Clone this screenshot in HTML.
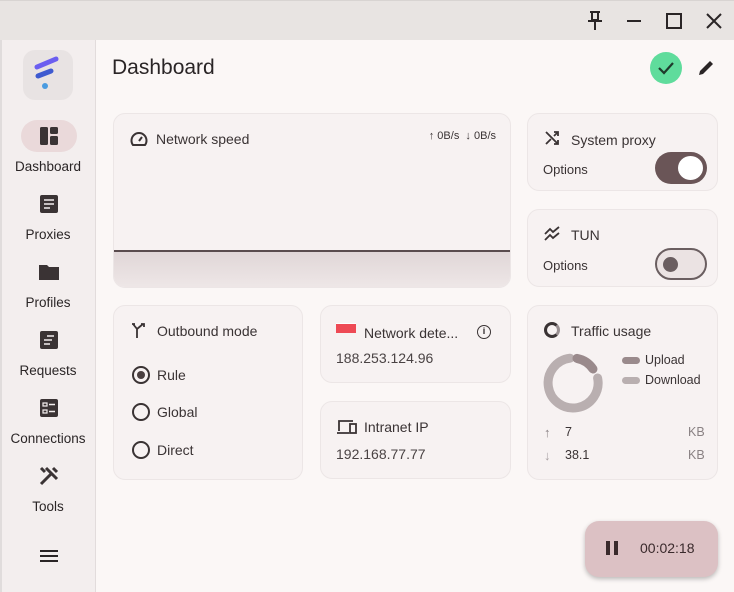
<!DOCTYPE html>
<html><head><meta charset="utf-8"><style>
*{box-sizing:border-box;margin:0;padding:0}
body{width:734px;height:592px;overflow:hidden;font-family:"Segoe UI","Liberation Sans",sans-serif;background:#fbf7f6;color:#2a2526;position:relative}
.tb{position:absolute;left:0;top:0;width:734px;height:40px;background:#e8e4e2;border-top:1px solid #d8d4d2}
.side{position:absolute;left:0;top:40px;width:96px;height:552px;background:#f3eeee;border-right:1px solid #e2dcdc;border-left:2px solid #e0dcdc}
.card{position:absolute;background:#f7f2f2;border:1px solid #ece6e6;border-radius:12px}
.t{position:absolute;font-size:14px;color:#3a3334}
.s{position:absolute;font-size:13px;color:#3a3334}
.nav{position:absolute;width:96px;text-align:center;font-size:13.5px;color:#2a2526;left:-2px}
</style></head><body>
<div class="tb">
<svg style="position:absolute;left:586px;top:10px" width="18" height="20" viewBox="0 0 18 20"><path d="M4 1h10M6 1v8h6V1M2 10h14M9 10v9" stroke="#2a2526" stroke-width="2" fill="none"/></svg>
<div style="position:absolute;left:627px;top:19px;width:14px;height:2px;background:#2a2526"></div>
<div style="position:absolute;left:666px;top:12px;width:16px;height:16px;border:2px solid #2a2526"></div>
<svg style="position:absolute;left:706px;top:12px" width="16" height="16"><path d="M1 1L15 15M15 1L1 15" stroke="#2a2526" stroke-width="2"/></svg>
</div>
<div class="side">
<div style="position:absolute;left:21px;top:10px;width:50px;height:50px;border-radius:12px;background:#e8e3e3"></div>
<svg style="position:absolute;left:30px;top:14px" width="32" height="40"><path d="M5 13L24 5" stroke="#6b5ef0" stroke-width="5" stroke-linecap="round"/><path d="M6 22L19 17" stroke="#3e5ad0" stroke-width="5" stroke-linecap="round"/><circle cx="13" cy="32" r="3" fill="#4a9be0"/></svg>
<div style="position:absolute;left:19px;top:80px;width:56px;height:32px;border-radius:16px;background:#ead9da"></div>
<svg style="position:absolute;left:37px;top:86px" width="20" height="20"><rect x="1" y="1" width="8" height="18" rx="1.5" fill="#3a3334"/><rect x="11" y="1" width="8" height="7" rx="1.5" fill="#3a3334"/><rect x="11" y="10" width="8" height="9" rx="1.5" fill="#3a3334"/></svg>
<div class="nav" style="top:119px">Dashboard</div>
<svg style="position:absolute;left:37px;top:154px" width="20" height="20"><rect x="1" y="1" width="18" height="18" rx="2" fill="#3a3334"/><path d="M5 6h10M5 10h10M5 14h6" stroke="#f3eeee" stroke-width="1.6"/></svg>
<div class="nav" style="top:187px">Proxies</div>
<svg style="position:absolute;left:36px;top:223px" width="22" height="18"><path d="M1 2h8l2 2h10v13H1z" fill="#3a3334"/></svg>
<div class="nav" style="top:255px">Profiles</div>
<svg style="position:absolute;left:37px;top:290px" width="20" height="20"><rect x="1" y="1" width="18" height="18" rx="2" fill="#3a3334"/><path d="M8 6h7M5 10h8M5 14h6" stroke="#f3eeee" stroke-width="1.6"/></svg>
<div class="nav" style="top:323px">Requests</div>
<svg style="position:absolute;left:37px;top:358px" width="20" height="20"><rect x="1" y="1" width="18" height="18" rx="2" fill="#3a3334"/><path d="M4 5h4v3H4zM4 12h4v3H4z" stroke="#f3eeee" stroke-width="1.2" fill="none"/><path d="M10 6.5h6M10 13.5h6" stroke="#f3eeee" stroke-width="1.6"/></svg>
<div class="nav" style="top:391px">Connections</div>
<svg style="position:absolute;left:36px;top:425px" width="22" height="22"><path d="M3 19L14 8M8 3l11 11M15 3l4 4M3 3l4 4" stroke="#3a3334" stroke-width="3"/></svg>
<div class="nav" style="top:459px">Tools</div>
<div style="position:absolute;left:38px;top:510px;width:18px;height:2px;background:#2a2526;box-shadow:0 5px 0 #2a2526,0 10px 0 #2a2526"></div>
</div>

<div style="position:absolute;left:112px;top:56px;font-size:21px;color:#2a2526">Dashboard</div>
<div style="position:absolute;left:650px;top:52px;width:32px;height:32px;border-radius:50%;background:#5fdc9c"></div>
<svg style="position:absolute;left:657px;top:60px" width="18" height="16"><path d="M2 8l5 5L16 3" stroke="#1f3a2c" stroke-width="2.2" fill="none"/></svg>
<svg style="position:absolute;left:696px;top:58px" width="20" height="20"><path d="M3 17l1-4L14 3l3 3L7 16z" fill="#2a2526"/></svg>

<div class="card" style="left:113px;top:113px;width:398px;height:175px;overflow:hidden">
<svg style="position:absolute;left:16px;top:17px" width="18" height="16"><path d="M3 14A7.5 7.5 0 1 1 15 14z" stroke="#3a3334" stroke-width="2" fill="none"/><path d="M9 10l3-4" stroke="#3a3334" stroke-width="2"/></svg>
<div class="t" style="left:42px;top:17px">Network speed</div>
<div style="position:absolute;right:14px;top:16px;font-size:11px;color:#3a3334">↑ 0B/s &nbsp;↓ 0B/s</div>
<div style="position:absolute;left:0;top:136px;width:398px;height:40px;background:linear-gradient(#e0d6d7,#efe8e8);border-top:2px solid #5a4c4e"></div>
</div>

<div class="card" style="left:527px;top:113px;width:191px;height:78px">
<svg style="position:absolute;left:16px;top:16px" width="16" height="16"><path d="M2 2l12 12M10 14h4v-4M2 14l5-5M10 2h4v4M14 2l-4 4" stroke="#3a3334" stroke-width="1.8" fill="none"/></svg>
<div class="t" style="left:43px;top:18px">System proxy</div>
<div class="s" style="left:15px;top:48px">Options</div>
<div style="position:absolute;left:127px;top:38px;width:52px;height:32px;border-radius:16px;background:#6a5557"></div>
<div style="position:absolute;left:150px;top:42px;width:25px;height:24px;border-radius:50%;background:#fff"></div>
</div>

<div class="card" style="left:527px;top:209px;width:191px;height:78px">
<svg style="position:absolute;left:16px;top:16px" width="18" height="16"><path d="M1 8l5-5 3 3 6-5M1 14l5-5 3 3 6-5" stroke="#3a3334" stroke-width="1.8" fill="none"/></svg>
<div class="t" style="left:43px;top:17px">TUN</div>
<div class="s" style="left:15px;top:48px">Options</div>
<div style="position:absolute;left:127px;top:38px;width:52px;height:32px;border-radius:16px;background:#ebe3e3;border:2px solid #6a5e60"></div>
<div style="position:absolute;left:135px;top:47px;width:15px;height:15px;border-radius:50%;background:#6a5e60"></div>
</div>

<div class="card" style="left:113px;top:305px;width:190px;height:175px">
<svg style="position:absolute;left:16px;top:16px" width="18" height="18"><path d="M3 2l4 5v9M7 7l6-5M11 2h3v3M2 2h3" stroke="#3a3334" stroke-width="1.8" fill="none"/></svg>
<div class="t" style="left:43px;top:17px">Outbound mode</div>
<div style="position:absolute;left:18px;top:60px;width:18px;height:18px;border-radius:50%;border:2px solid #3a3334"></div>
<div style="position:absolute;left:23px;top:65px;width:8px;height:8px;border-radius:50%;background:#4a3f40"></div>
<div class="t" style="left:43px;top:61px">Rule</div>
<div style="position:absolute;left:18px;top:97px;width:18px;height:18px;border-radius:50%;border:2px solid #3a3334"></div>
<div class="t" style="left:43px;top:98px">Global</div>
<div style="position:absolute;left:18px;top:135px;width:18px;height:18px;border-radius:50%;border:2px solid #3a3334"></div>
<div class="t" style="left:43px;top:136px">Direct</div>
</div>

<div class="card" style="left:320px;top:305px;width:191px;height:78px">
<div style="position:absolute;left:15px;top:17px;width:20px;height:10px;background:#ee4a55;border-top:1px solid #fff"></div>
<div class="t" style="left:43px;top:19px">Network dete...</div>
<div style="position:absolute;left:156px;top:19px;width:14px;height:14px;border-radius:50%;border:1.6px solid #3a3334;font-size:9px;line-height:11px;text-align:center;font-weight:bold">i</div>
<div class="t" style="left:15px;top:44px;color:#4a4344">188.253.124.96</div>
</div>

<div class="card" style="left:320px;top:401px;width:191px;height:78px">
<svg style="position:absolute;left:15px;top:17px" width="22" height="16"><path d="M3 12V2h14M1 14h12" stroke="#3a3334" stroke-width="1.8" fill="none"/><rect x="14" y="5" width="6" height="9" stroke="#3a3334" stroke-width="1.8" fill="none"/></svg>
<div class="t" style="left:43px;top:17px">Intranet IP</div>
<div class="t" style="left:15px;top:44px;color:#4a4344">192.168.77.77</div>
</div>

<div class="card" style="left:527px;top:305px;width:191px;height:175px">
<div style="position:absolute;left:16px;top:16px;width:16px;height:16px;border-radius:50%;border:3px solid #3a3334;border-right-color:#9a9092"></div>
<div class="t" style="left:43px;top:17px">Traffic usage</div>
<svg style="position:absolute;left:14px;top:46px" width="62" height="62" viewBox="0 0 62 62"><path d="M28 6.2A25 25 0 1 0 55.6 26" stroke="#b9afb0" stroke-width="9" fill="none" stroke-linecap="round"/><path d="M35 6.4A25 25 0 0 1 51 17" stroke="#9a8a8c" stroke-width="9" fill="none" stroke-linecap="round"/></svg>
<div style="position:absolute;left:94px;top:51px;width:18px;height:7px;border-radius:4px;background:#9a8a8c"></div>
<div class="s" style="left:117px;top:47px;font-size:12.5px">Upload</div>
<div style="position:absolute;left:94px;top:71px;width:18px;height:7px;border-radius:4px;background:#b9afb0"></div>
<div class="s" style="left:117px;top:67px;font-size:12.5px">Download</div>
<div class="s" style="left:16px;top:119px;color:#8a8284">↑</div>
<div class="s" style="left:37px;top:119px;font-size:12.5px">7</div>
<div class="s" style="left:160px;top:119px;color:#8a8284;font-size:12.5px">KB</div>
<div class="s" style="left:16px;top:142px;color:#a8a0a2">↓</div>
<div class="s" style="left:37px;top:142px;font-size:12.5px">38.1</div>
<div class="s" style="left:160px;top:142px;color:#8a8284;font-size:12.5px">KB</div>
</div>

<div style="position:absolute;left:585px;top:521px;width:133px;height:56px;border-radius:14px;background:#dcc1c4;box-shadow:0 2px 5px rgba(0,0,0,.25)"></div>
<div style="position:absolute;left:606px;top:541px;width:4px;height:14px;background:#3a2a2c"></div>
<div style="position:absolute;left:614px;top:541px;width:4px;height:14px;background:#3a2a2c"></div>
<div style="position:absolute;left:640px;top:540px;font-size:14px;color:#3a2a2c">00:02:18</div>
</body></html>
